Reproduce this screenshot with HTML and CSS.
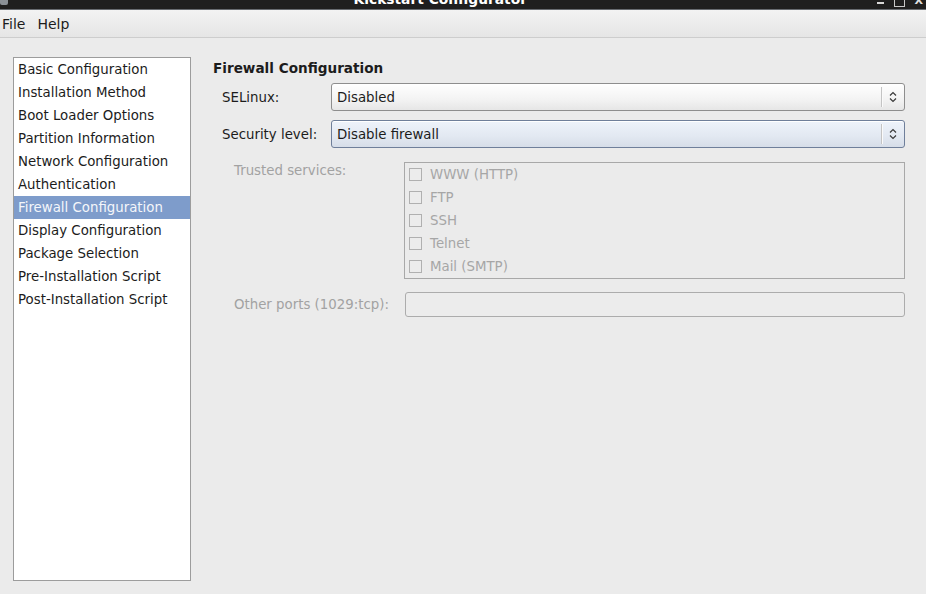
FILE: index.html
```html
<!DOCTYPE html>
<html lang="en">
<head>
  <meta charset="UTF-8">
  <title>Kickstart Configurator</title>
  <link rel="stylesheet" href="styles.css">
</head>
<body>

<div class="titlebar">
  <span class="app-icon"></span>
  <span class="title">Kickstart Configurator</span>
  <span class="controls">
    <span class="ctl-min"></span>
    <span class="ctl-max"></span>
    <span class="ctl-close">X</span>
  </span>
</div>

<div class="menubar">
  <span class="menu">File</span>
  <span class="menu">Help</span>
</div>

<div class="main">
  <ul class="sidebar">
    <li>Basic Configuration</li>
    <li>Installation Method</li>
    <li>Boot Loader Options</li>
    <li>Partition Information</li>
    <li>Network Configuration</li>
    <li>Authentication</li>
    <li class="selected">Firewall Configuration</li>
    <li>Display Configuration</li>
    <li>Package Selection</li>
    <li>Pre-Installation Script</li>
    <li>Post-Installation Script</li>
  </ul>

  <div class="panel">
    <h2>Firewall Configuration</h2>

    <div class="row combo-row">
      <span class="label">SELinux:</span>
      <div class="combo">
        <span class="combo-text">Disabled</span>
        <span class="combo-sep"></span>
        <svg class="chevron" width="8" height="14" viewBox="0 0 8 14">
          <path d="M1 5.5 L4 2.5 L7 5.5 M1 8.5 L4 11.5 L7 8.5" fill="none" stroke="#3a3a3a" stroke-width="1.2"/>
        </svg>
      </div>
    </div>

    <div class="row combo-row second">
      <span class="label">Security level:</span>
      <div class="combo focused">
        <span class="combo-text">Disable firewall</span>
        <span class="combo-sep"></span>
        <svg class="chevron" width="8" height="14" viewBox="0 0 8 14">
          <path d="M1 5.5 L4 2.5 L7 5.5 M1 8.5 L4 11.5 L7 8.5" fill="none" stroke="#3a3a3a" stroke-width="1.2"/>
        </svg>
      </div>
    </div>

    <div class="row services-row">
      <span class="label disabled">Trusted services:</span>
      <div class="services">
        <label class="check"><span class="box"></span>WWW (HTTP)</label>
        <label class="check"><span class="box"></span>FTP</label>
        <label class="check"><span class="box"></span>SSH</label>
        <label class="check"><span class="box"></span>Telnet</label>
        <label class="check"><span class="box"></span>Mail (SMTP)</label>
      </div>
    </div>

    <div class="row ports-row">
      <span class="label disabled">Other ports (1029:tcp):</span>
      <div class="entry"></div>
    </div>
  </div>
</div>

</body>
</html>
```

FILE: styles.css
```css
body {
  margin: 0;
  font-family: "DejaVu Sans", sans-serif;
  font-size: 13.33px;
  color: #1c1c1c;
  background: #ebebeb;
  width: 926px;
  height: 594px;
  overflow: hidden;
}

.titlebar {
  display: flex;
  height: 9px;
  overflow: hidden;
  background: #1f1f1f;
  border-bottom: 1px solid #676b70;
  color: white;
}
.app-icon {
  width: 8px;
  height: 5px;
  background: #8a9096;
  border-radius: 0 0 2px 2px;
}
.title {
  flex: 1;
  text-align: center;
  font-weight: bold;
  font-size: 13.8px;
  line-height: 18px;
  margin-top: -10px;
  padding-right: 4px;
}
.controls {
  display: flex;
  align-items: flex-start;
  gap: 10px;
  padding-right: 3px;
}
.ctl-min {
  width: 7px;
  height: 2px;
  margin-top: 2px;
  background: #d8d8d8;
}
.ctl-max {
  width: 9px;
  height: 9px;
  margin-top: -4px;
  border: 1px solid #c8c8c8;
}
.ctl-close {
  font-size: 11px;
  font-weight: bold;
  line-height: 11px;
  margin-top: -5px;
  color: #e0e0e0;
}

.menubar {
  display: flex;
  height: 27px;
  align-items: center;
  padding-left: 2px;
  gap: 12px;
  background: linear-gradient(#f3f3f3, #e5e5e5);
  border-bottom: 1px solid #cdcdcd;
  font-size: 14px;
}

.main {
  display: flex;
  padding: 19px 21px 0 13px;
  gap: 22px;
}

.sidebar {
  list-style: none;
  margin: 0;
  padding: 0;
  width: 176px;
  height: 522px;
  background: white;
  border: 1px solid #9c9c9c;
}
.sidebar li {
  height: 23px;
  line-height: 23px;
  padding-left: 4px;
  white-space: nowrap;
}
.sidebar li.selected {
  background: #7e9ccb;
  color: #f4f6fa;
}

.panel {
  flex: 1;
}
.panel h2 {
  margin: 3px 0 0;
  font-size: 13.6px;
  line-height: 16px;
  height: 16px;
}

.row {
  display: flex;
}
.combo-row {
  margin-top: 7px;
  padding-left: 9px;
  align-items: center;
}
.combo-row.second {
  margin-top: 9px;
}
.combo-row .label {
  width: 109px;
}

.combo {
  flex: 1;
  display: flex;
  align-items: center;
  height: 26px;
  border: 1px solid #8e8e8e;
  border-radius: 3px;
  background: linear-gradient(#ffffff, #f3f3f3 60%, #e6e6e6);
  box-shadow: inset 0 1px 0 #fff;
}
.combo.focused {
  border-color: #6f7f9a;
  background: linear-gradient(#eef3fb, #e2e8f1 60%, #d6dde8);
}
.combo-text {
  flex: 1;
  padding-left: 5px;
}
.combo-sep {
  width: 1px;
  height: 20px;
  background: #c4c4c4;
  border-right: 1px solid #fafafa;
}
.chevron {
  margin: 0 7px 0 6px;
}

.services-row {
  margin-top: 14px;
  padding-left: 21px;
}
.services-row .label {
  width: 170px;
  padding-top: 2px;
  line-height: 14px;
}
.disabled {
  color: #a2a2a2;
}

.services {
  flex: 1;
  border: 1px solid #a8a8a8;
  height: 115px;
}
.check {
  display: flex;
  align-items: center;
  height: 23px;
  color: #a6a6a6;
}
.box {
  width: 11px;
  height: 11px;
  margin: 0 8px 0 4px;
  border: 1px solid #b0b0b0;
  background: #ececec;
}

.ports-row {
  margin-top: 13px;
  padding-left: 21px;
  align-items: center;
}
.ports-row .label {
  width: 171px;
}
.entry {
  flex: 1;
  height: 23px;
  border: 1px solid #acacac;
  border-radius: 3px;
  background: #ececec;
}
```
